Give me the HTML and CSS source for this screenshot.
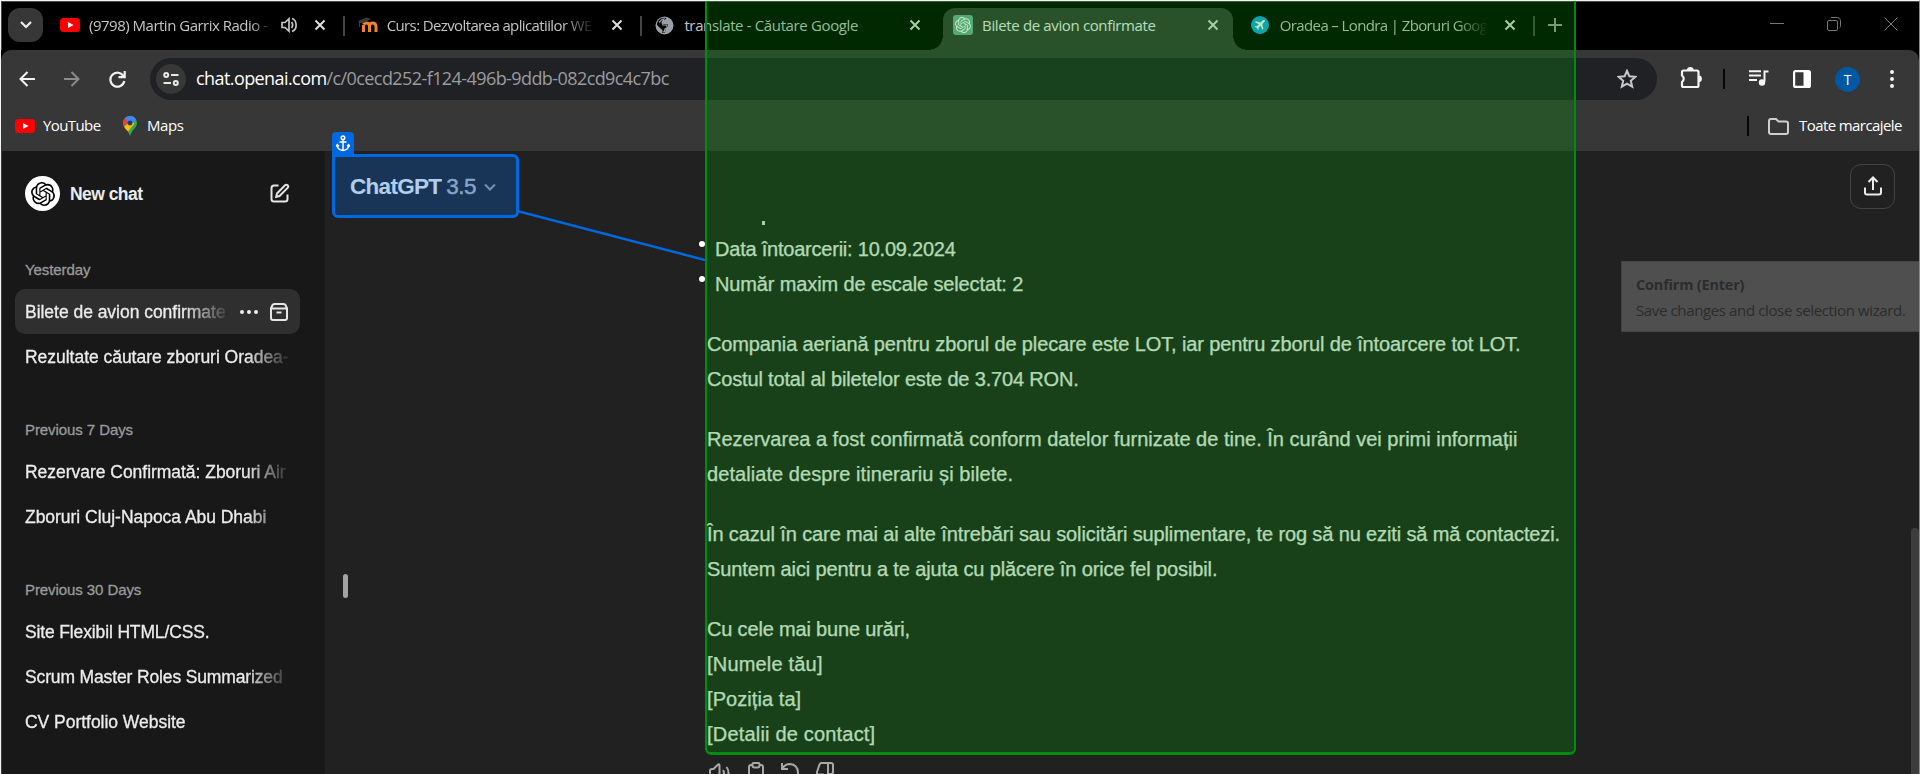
FILE: index.html
```html
<!DOCTYPE html>
<html lang="ro">
<head>
<meta charset="utf-8">
<title>Bilete de avion confirmate</title>
<link rel="stylesheet" href="styles.css">
</head>
<body>
<svg class="defs" width="0" height="0">
  <symbol id="knot" viewBox="0 0 24 24"><path fill="currentColor" d="M22.2819 9.8211a5.9847 5.9847 0 0 0-.5157-4.9108 6.0462 6.0462 0 0 0-6.5098-2.9A6.0651 6.0651 0 0 0 4.9807 4.1818a5.9847 5.9847 0 0 0-3.9977 2.9 6.0462 6.0462 0 0 0 .7427 7.0966 5.98 5.98 0 0 0 .511 4.9107 6.051 6.051 0 0 0 6.5146 2.9001A5.9847 5.9847 0 0 0 13.2599 24a6.0557 6.0557 0 0 0 5.7718-4.2058 5.9894 5.9894 0 0 0 3.9977-2.9001 6.0557 6.0557 0 0 0-.7475-7.0729zm-9.022 12.6081a4.4755 4.4755 0 0 1-2.8764-1.0408l.1419-.0804 4.7783-2.7582a.7948.7948 0 0 0 .3927-.6813v-6.7369l2.02 1.1686a.071.071 0 0 1 .038.052v5.5826a4.504 4.504 0 0 1-4.4945 4.4944zm-9.6607-4.1254a4.4708 4.4708 0 0 1-.5346-3.0137l.142.0852 4.783 2.7582a.7712.7712 0 0 0 .7806 0l5.8428-3.3685v2.3324a.0804.0804 0 0 1-.0332.0615L9.74 19.9502a4.4992 4.4992 0 0 1-6.1408-1.6464zM2.3408 7.8956a4.485 4.485 0 0 1 2.3655-1.9728V11.6a.7664.7664 0 0 0 .3879.6765l5.8144 3.3543-2.0201 1.1685a.0757.0757 0 0 1-.071 0l-4.8303-2.7865A4.504 4.504 0 0 1 2.3408 7.872zm16.5963 3.8558L13.1038 8.364 15.1192 7.2a.0757.0757 0 0 1 .071 0l4.8303 2.7913a4.4944 4.4944 0 0 1-.6765 8.1042v-5.6772a.79.79 0 0 0-.407-.667zm2.0107-3.0231l-.142-.0852-4.7735-2.7818a.7759.7759 0 0 0-.7854 0L9.409 9.2297V6.8974a.0662.0662 0 0 1 .0284-.0615l4.8303-2.7866a4.4992 4.4992 0 0 1 6.6802 4.66zM8.3065 12.863l-2.02-1.1638a.0804.0804 0 0 1-.038-.0567V6.0742a4.4992 4.4992 0 0 1 7.3757-3.4537l-.142.0805L8.704 5.459a.7948.7948 0 0 0-.3927.6813zm1.0976-2.3654l2.602-1.4998 2.6069 1.4998v2.9994l-2.5974 1.4997-2.6067-1.4997Z"/></symbol>
  <symbol id="close" viewBox="0 0 16 16"><path d="M3.5 3.5l9 9M12.5 3.5l-9 9" fill="none" stroke="currentColor" stroke-width="2"/></symbol>
  <symbol id="youtube" viewBox="0 0 20 14"><rect width="20" height="14" rx="3.5" fill="#f00"/><path d="M8 4l5.5 3L8 10z" fill="#fff"/></symbol>
</svg>

<div class="window">
  <header class="tabs">
    <button class="tab-search"><svg width="12" height="8" viewBox="0 0 12 8"><path d="M1 1l5 5 5-5" fill="none" stroke="#eee" stroke-width="2.2"/></svg></button>
    <div class="tab with-sound">
      <svg class="tab-icon" height="14"><use href="#youtube"/></svg>
      <span class="tab-title">(9798) Martin Garrix Radio -</span>
      <svg class="speaker" width="17" height="16" viewBox="0 0 17 16"><path d="M1 5.5h3l4-3.7v12.400L4 10.500H1z" fill="none" stroke="currentColor" stroke-width="1.700"/><path d="M10.500 5q2.300 3 0 6M11 1.500c5.500 2 5.500 11 0 13" fill="none" stroke="currentColor" stroke-width="1.700"/></svg>
      <svg class="tab-close"><use href="#close"/></svg>
    </div>
    <div class="tab long">
      <svg class="tab-icon" height="18" viewBox="0 0 20 18"><path d="M5.500 16V9M11.500 16V10q0-3-3-3-2 0-3 1.500M11.500 10q0-3 3-3t3.500 3v6" fill="none" stroke="#ef8430" stroke-width="3"/><path d="M0 5l8.500-3.500L13 3 5.500 7 2 7v4H1V7z" fill="#3e3a3a"/></svg>
      <span class="tab-title">Curs: Dezvoltarea aplicatiilor WE</span>
      <svg class="tab-close"><use href="#close"/></svg>
    </div>
    <div class="tab no-line">
      <svg class="tab-icon" height="19" viewBox="0 0 20 19"><circle cx="9.500" cy="9.500" r="9" fill="#9ba0a8"/><path d="M11.500 2q-1.500 2-3.500 2.500l-1 2 1.500 1.500h4l.5 3-2.500 2-.5 3.500-3 .5.500-3-2.500-2L2 9q-.2-2 1-4 3-4 8.500-3z" fill="#060606"/><path d="M4 6.500l3-3 2-.5-2 3.500 1 2.500h3.500l1 2.500-2.500 1.500-.5 2.500-2 .5" fill="none" stroke="#9ba0a8" stroke-width="1.200"/></svg>
      <span class="tab-title">translate - Căutare Google</span>
      <svg class="tab-close"><use href="#close"/></svg>
    </div>
    <div class="tab active no-line">
      <span class="tab-icon gpt-icon"><svg width="16" height="16"><use href="#knot"/></svg></span>
      <span class="tab-title">Bilete de avion confirmate</span>
      <svg class="tab-close"><use href="#close"/></svg>
    </div>
    <div class="tab long">
      <svg class="tab-icon" height="20" viewBox="0 0 20 20"><circle cx="9" cy="10" r="9" fill="#12a5e2"/><path d="M13.700 5.300c-.7-.7-1.600-.3-2.200.3L9.700 7.400 4.800 6.300l-.9.900 4 2-2 2-1.500-.2-.6.600 2 1.300 1.300 2 .6-.6-.2-1.500 2-2 2 4 .9-.9-1.100-4.900 1.800-1.800c.6-.6 1.200-1.400.6-1.900z" fill="#fff"/></svg>
      <span class="tab-title">Oradea – Londra | Zboruri Goog</span>
      <svg class="tab-close"><use href="#close"/></svg>
    </div>
    <svg class="new-tab" width="14" height="14"><path d="M7 0v14M0 7h14" stroke="#999" stroke-width="2"/></svg>
    <div class="controls">
      <svg width="14" height="14"><path d="M0 6.500h14" stroke="currentColor"/></svg>
      <svg width="14" height="14" fill="none" stroke="currentColor"><rect x=".5" y="3.500" width="10" height="10" rx="1.500"/><path d="M3.500 1q.5-.5 1.500-.5h5q3.500 0 3.500 3v5q0 1.500-.5 2"/></svg>
      <svg width="14" height="14"><path d="M.5.5l13 13M13.500.5l-13 13" stroke="currentColor"/></svg>
    </div>
  </header>

  <div class="toolbar">
    <div class="nav">
      <svg width="16" height="16" fill="none" stroke="#f2f2f2" stroke-width="2"><path d="M16 8H1.500M8.500 1L1.500 8l7 7"/></svg>
      <svg width="16" height="16" fill="none" stroke="#8a8a8a" stroke-width="2"><path d="M0 8h14.500M7.500 1l7 7-7 7"/></svg>
      <svg width="17" height="17" fill="none" stroke="#f2f2f2" stroke-width="2.200"><path d="M14.500 5.200A7 7 0 1 0 15.300 10"/><path d="M15.700 0v6.200H9.500" /></svg>
    </div>
    <div class="address">
      <span class="site-info"><svg width="16" height="14" fill="none" stroke="#e8e8e8" stroke-width="2"><circle cx="3.200" cy="3" r="2"/><path d="M8 3h7.500M.5 11H8"/><circle cx="12.800" cy="11" r="2"/></svg></span>
      <span class="url"><b>chat.openai.com</b>/c/0cecd252-f124-496b-9ddb-082cd9c4c7bc</span>
      <svg class="star" width="20" height="20" viewBox="0 0 20 20"><path d="M10 1.800l2.400 5.500 6 .5-4.600 4 1.400 5.900-5.200-3.100-5.200 3.100 1.400-5.900-4.600-4 6-.5z" fill="none" stroke="#c8c8cc" stroke-width="2"/></svg>
    </div>
    <div class="actions">
      <svg class="puzzle" width="22" height="22" viewBox="0 0 22 22"><path d="M3.500 3.500H17q1.500 0 1.500 1.500v13.500q0 1.500-1.500 1.500H3.500Q2 20 2 18.500V15q3.500-3.300 0-6.500V5q0-1.500 1.500-1.500z" fill="none" stroke="#f4f4f4" stroke-width="2.200"/><path d="M7 3a3.300 3 0 0 1 6.600 0zM19 8.500a2.900 3.200 0 0 1 0 6.400z" fill="#f4f4f4"/></svg>
      <i class="bar"></i>
      <svg class="music" width="20" height="16" viewBox="0 0 20 16"><path d="M0 1.200h12M0 5.600h12M0 10h8M15.500 11.500V1.500h4" fill="none" stroke="#f4f4f4" stroke-width="2"/><circle cx="13" cy="12.500" r="3.200" fill="#f4f4f4"/></svg>
      <svg class="panel" width="18" height="18"><rect x="1.100" y="1.100" width="15.800" height="15.800" rx="1.500" fill="none" stroke="#fff" stroke-width="2.200"/><path d="M10.500 1h7v16h-7z" fill="#fff"/></svg>
      <span class="avatar">T</span>
      <svg class="dots" width="4" height="18" fill="#f4f4f4"><circle cx="2" cy="2" r="2"/><circle cx="2" cy="9" r="2"/><circle cx="2" cy="16" r="2"/></svg>
    </div>
  </div>

  <div class="bookmarks">
    <svg class="bm-youtube" width="20" height="14"><use href="#youtube"/></svg><span class="bm-label bm-yt-label">YouTube</span>
    <svg class="pin" width="14" height="20" viewBox="0 0 14 20"><path d="M7 0a7 7 0 0 1 7 7c0 5-5.500 7-7 13C5.500 14 0 12 0 7a7 7 0 0 1 7-7z" fill="#34a853"/><path d="M1 10.500L9.300 5l2.200 2.500-6.300 8Q2 13 1 10.500z" fill="#fbbc04"/><path d="M1.500 2.600A7 7 0 0 1 13 3.500L7 9.500z" fill="#4285f4"/><path d="M1.500 2.600Q0 4.600 0 7q0 2 1 3.500L5.500 6z" fill="#ea4335"/><circle cx="7" cy="7" r="2.400" fill="#263c63"/></svg><span class="bm-label bm-maps">Maps</span>
    <i class="bar bm-bar"></i>
    <svg class="folder" width="21" height="17" viewBox="0 0 21 17"><path d="M1 3q0-2 2-2h5l2.500 2.500H18q2 0 2 2V14q0 2-2 2H3q-2 0-2-2z" fill="none" stroke="#cfcfcf" stroke-width="2"/></svg><span class="bm-label bm-all">Toate marcajele</span>
  </div>

  <div class="page">
    <aside class="sidebar">
      <div class="new-chat">
        <span class="logo"><svg width="24" height="24"><use href="#knot"/></svg></span>
        <span class="new-label">New chat</span>
        <svg width="20" height="20" viewBox="0 0 20 20" fill="none" stroke="#e6e6e6" stroke-width="2"><path d="M8.500 2.500H4q-2.500 0-2.500 2.500v11q0 2.500 2.500 2.500h11q2.500 0 2.500-2.500v-4.500"/><path d="M7 10.500l8-8.200q1.300-1.200 2.600 0 1.300 1.300 0 2.600L9.500 13l-3.300.8z"/></svg>
      </div>
      <section>
        <h3>Yesterday</h3>
        <div class="chat current"><span class="fade">Bilete de avion confirmate</span>
          <svg width="18" height="4" fill="#eee"><circle cx="2" cy="2" r="2"/><circle cx="9" cy="2" r="2"/><circle cx="16" cy="2" r="2"/></svg>
          <svg width="18" height="18" viewBox="0 0 18 18" fill="none" stroke="#e6e6e6" stroke-width="2"><path d="M1 5.500h16V15q0 2-2 2H3q-2 0-2-2zM1 5.500L2.500 2q.5-1 2-1h9q1.500 0 2 1L17 5.500M6.500 9.500h5"/></svg>
        </div>
        <div class="chat"><span class="fade">Rezultate căutare zboruri Oradea-</span></div>
      </section>
      <section>
        <h3>Previous 7 Days</h3>
        <div class="chat"><span class="fade">Rezervare Confirmată: Zboruri Air</span></div>
        <div class="chat"><span class="fade">Zboruri Cluj-Napoca Abu Dhabi</span></div>
      </section>
      <section>
        <h3>Previous 30 Days</h3>
        <div class="chat"><span class="fade tight">Site Flexibil HTML/CSS.</span></div>
        <div class="chat"><span class="fade tight">Scrum Master Roles Summarized</span></div>
        <div class="chat"><span class="fade">CV Portfolio Website</span></div>
      </section>
    </aside>
    <main class="main">
      <div class="main-head">
        <div class="model"><b>ChatGPT</b> <span>3.5</span><svg width="12" height="8"><path d="M1 1.500l5 5 5-5" fill="none" stroke="#9a9a9a" stroke-width="2"/></svg></div>
        <button class="share"><svg width="18" height="20" fill="none" stroke="#ececec" stroke-width="2"><path d="M9 14V2M4.500 6L9 1.500 13.500 6M1 11.500v5q0 2 2 2h12q2 0 2-2v-5"/></svg></button>
      </div>
      <article class="message">
        <ul>
          <li class="t3">Data întoarcerii: 10.09.2024</li>
          <li class="t1">Număr maxim de escale selectat: 2</li>
        </ul>
        <p><span class="t1">Compania aeriană pentru zborul de plecare este LOT, iar pentru zborul de întoarcere tot LOT.</span><br><span class="t2">Costul total al biletelor este de 3.704 RON.</span></p>
        <p><span>Rezervarea a fost confirmată conform datelor furnizate de tine. În curând vei primi informații</span><br><span class="w1">detaliate despre itinerariu și bilete.</span></p>
        <p><span class="t1">În cazul în care mai ai alte întrebări sau solicitări suplimentare, te rog să nu eziti să mă contactezi.</span><br><span class="t1">Suntem aici pentru a te ajuta cu plăcere în orice fel posibil.</span></p>
        <p><span class="t2">Cu cele mai bune urări,</span><br><span class="w2">[Numele tău]</span><br><span class="w1">[Poziția ta]</span><br><span class="w2">[Detalii de contact]</span></p>
        <div class="reply-actions">
          <svg width="22" height="20"><path d="M1 9q0-2 2-2h1.500L9 2.500q1.500-1 1.500 1V19M14 8q2 3 0 7M17.500 5q4 5 0 12M1 9v8"/></svg>
          <svg width="16" height="20"><path d="M4.500 3H3Q1 3 1 5v14M11.500 3H13q2 0 2 2v14M4.500 2q0-1 1-1h5q1 0 1 1v1.500q0 2-2 2h-3q-2 0-2-2z"/></svg>
          <svg width="18" height="20"><path d="M1 1v6h6M1.500 6.500Q4 2 9 2q7.500.5 8 8.500v5"/></svg>
          <svg width="18" height="20"><path d="M12 1H5.500Q4 1 3.500 2.500L1 10q-.5 2.500 2 2.500h4V19M12 1v11l-4 6M12 1h3q2 0 2 2v7q0 2-2 2h-3"/></svg>
        </div>
      </article>
      <i class="scrollbar"></i>
      <i class="handle"></i>
      <i class="clipped"></i>
    </main>
  </div>

  <div class="tooltip"><b>Confirm (Enter)</b><span>Save changes and close selection wizard.</span></div>
  <div class="target"></div>
  <svg class="connector" width="186" height="52"><path d="M0 1.500L186 50" stroke="#0068e0" stroke-width="2.500"/></svg>
  <div class="anchor-box"></div>
  <div class="anchor-tag"><svg width="14" height="17" viewBox="0 0 14 17" fill="none" stroke="#fff" stroke-width="1.500"><circle cx="7" cy="2.700" r="1.800"/><path d="M7 4.500V16M3.500 7h7M1.200 10q.3 5 5.800 5.500 5.500-.5 5.800-5.500M0 11.500L1.300 9.700l1.700 1.500M14 11.500l-1.300-1.800-1.700 1.500"/></svg></div>
</div>
</body>
</html>
```
FILE: styles.css
```css
* { box-sizing: border-box; }
body { margin: 0; background: #212121; }
.defs { position: absolute; }
button { padding: 0; border: 0; display: flex; align-items: center; justify-content: center; }
svg { flex: none; display: block; }

.window {
  position: relative; width: 1920px; height: 774px; overflow: hidden;
  display: flex; flex-direction: column;
  border: 1px solid #f4f4f4; border-right-color: #8a8a8a; border-bottom: 0;
  background: #000; color: #fff;
  font-family: "Open Sans", "Noto Sans", sans-serif;
}

/* Tab strip */
.tabs { height: 49px; display: flex; padding-left: 7px; flex: none; box-shadow: inset 1px 1px 0 #4a4a4a; }
.tab-search { width: 35px; height: 34px; margin: 7px 7px 0 0; border-radius: 12px; background: #373737; }
.tab { position: relative; width: 289.700px; height: 42px; margin: 7px 8px 0 0; padding: 0 12px 0 10px; display: flex; align-items: center; color: #c4c4c4; }
.tab::after { content: ""; position: absolute; right: -5px; top: 8px; width: 2px; height: 20px; background: #454545; }
.tab.no-line::after { display: none; }
.tab.active { background: #373737; border-radius: 12px 12px 0 0; color: #f0f0f0; }
.tab.active::before { content: ""; position: absolute; left: -14px; right: -14px; bottom: 0; height: 14px;
  background: radial-gradient(circle at 0 0, transparent 13.500px, #373737 14px) left / 14px 14px no-repeat,
              radial-gradient(circle at 100% 0, transparent 13.500px, #373737 14px) right / 14px 14px no-repeat; }
.tab > * { margin-bottom: 8px; }
.tab-icon { width: 20px; margin-right: 9px; flex: none; }
.gpt-icon { height: 20px; border-radius: 3px; background: #74aa9c; display: flex; align-items: center; justify-content: center; color: #fff; }
.tab-title { flex: 1; min-width: 0; overflow: hidden; white-space: nowrap; font-size: 15px; line-height: 24px; letter-spacing: -.36px; margin-right: 12px; }
.long .tab-title { letter-spacing: -.62px; mask-image: linear-gradient(90deg, #000 calc(100% - 34px), transparent calc(100% - 2px)); }
.with-sound .tab-title { letter-spacing: -.5px; margin-right: 18px; mask-image: linear-gradient(90deg, #000 calc(100% - 22px), transparent); }
.speaker { margin: 0 14px 8px -10px; }
.tab-close { width: 16px; height: 16px; color: #dedede; }
.new-tab { margin: 17px 0 0 10px; }
.controls { margin-left: auto; display: flex; gap: 43px; padding: 16px 21px 0 0; color: #777; }

/* Toolbar */
.toolbar { height: 59px; flex: none; display: flex; align-items: center; background: #373737; border-radius: 10px 10px 0 0; padding-bottom: 1px; }
.nav { width: 149px; padding-left: 18px; display: flex; gap: 29px; }
.address { width: 1507px; height: 42px; border-radius: 21px; background: #202124; display: flex; align-items: center; padding: 0 20px 0 6px; }
.site-info { width: 30px; height: 30px; border-radius: 50%; background: #373737; display: flex; align-items: center; justify-content: center; }
.url { margin: -2px 0 0 10px; flex: 1; font-size: 18px; letter-spacing: -.58px; color: #9a9ca0; }
.url b { font-weight: 400; color: #fff; }
.actions { flex: 1; display: flex; align-items: center; padding-left: 23px; }
.bar { width: 2px; height: 20px; background: #050505; }
.puzzle { margin: -3px 21px 0 0; }
.music { margin: -2px 0 0 24px; }
.panel { margin-left: 24px; }
.avatar { width: 25px; height: 25px; margin-left: 24px; border-radius: 50%; background: #0058a3; font-size: 14px; line-height: 25px; text-align: center; }
.dots { margin-left: 30px; }

/* Bookmarks bar */
.bookmarks { height: 42px; flex: none; display: flex; align-items: center; padding: 0 16px 8px 14px; background: #373737; font-size: 15px; letter-spacing: -.45px; white-space: nowrap; }
.bm-label { margin-top: -2px; }
.bm-yt-label { width: 58px; margin-left: 8px; letter-spacing: -.6px; }
.pin { margin-left: 22px; }
.bm-maps { margin-left: 10px; }
.bm-bar { margin-left: auto; }
.folder { margin: 0 10px 0 19px; }
.bm-all { width: 104px; letter-spacing: -.58px; }

/* Page */
.page { flex: 1; display: flex; min-height: 0; font-family: "Liberation Sans", Arial, sans-serif; }
.sidebar { width: 324px; background: #181818; padding: 0 25px 0 13px; border-left: 1px solid #3c3c3c; color: #ececec; }
.new-chat { height: 51px; margin-top: 17px; display: flex; align-items: center; padding: 0 10px 0 10px; }
.new-chat > svg { margin-top: -2px; }
.logo { width: 35px; height: 35px; border-radius: 50%; background: #fff; color: #000; display: flex; align-items: center; justify-content: center; }
.new-label { flex: 1; margin-left: 10px; margin-top: 2px; font-size: 17.500px; font-weight: 700; letter-spacing: -.55px; }
.sidebar section { height: 160px; }
.sidebar section:first-of-type { margin-top: 38px; }
.sidebar h3 { margin: 0 0 0 10px; height: 32px; line-height: 25px; font-size: 15px; letter-spacing: -.08px; color: #9b9b9b; font-weight: 500; -webkit-text-stroke: .3px; }
.chat { height: 45px; padding: 0 12px 0 10px; display: flex; align-items: center; border-radius: 10px; }
.chat.current { background: #2f2f2f; }
.chat.current svg { margin-left: 12px; }
.chat.current svg:first-of-type { margin-left: 14px; }
.fade { flex: 1; min-width: 0; overflow: hidden; white-space: nowrap; font-size: 17.500px; letter-spacing: -.03px; line-height: 26px; -webkit-text-stroke: .3px;
  mask-image: linear-gradient(90deg, #000 calc(100% - 42px), rgba(0, 0, 0, .1)); }
.tight { letter-spacing: -.14px; }

.main { position: relative; flex: 1; background: #212121; }
.main-head { height: 75px; display: flex; justify-content: space-between; align-items: center; padding: 0 24px 4px 25px; }
.model { display: flex; align-items: center; font-size: 22.500px; color: #b4b4b4; letter-spacing: -.6px; }
.model b { color: #ececec; margin-right: 5px; letter-spacing: -.7px; }
.model span { -webkit-text-stroke: .5px; }
.model svg { margin: 1px 0 0 8px; }
.share { width: 45px; height: 45px; border: 1px solid #444; border-radius: 11px; background: none; }
.share svg { margin-top: -2px; }
.message { margin-left: 382px; padding-top: 6px; font-size: 20px; line-height: 35px; color: #ececec; white-space: nowrap; -webkit-text-stroke: .25px; }
.message ul { margin: 0; padding: 0 0 0 8px; list-style: none; }
.message li { position: relative; }
.message li::before { content: ""; position: absolute; left: -16px; top: 9px; width: 6px; height: 6px; border-radius: 50%; background: #fff; }
.message p { margin: 25px 0 0; }
.t1 { letter-spacing: -.125px; }
.t2 { letter-spacing: -.17px; }
.t3 { letter-spacing: -.22px; }
.w1 { letter-spacing: .07px; }
.w2 { letter-spacing: .19px; }
.reply-actions { display: flex; gap: 17px; margin: 10px 0 0 2px; height: 12px; overflow: hidden; fill: none; stroke: #a8a8a8; stroke-width: 2; }
.scrollbar { position: absolute; right: 0; top: 377px; bottom: 0; width: 8px; border-radius: 4px 4px 0 0; background: #3d3d3d; }
.handle { position: absolute; left: 18px; top: 423px; width: 5px; height: 24px; border-radius: 3px; background: #a3a3a3; }
.clipped { position: absolute; left: 437px; top: 70px; width: 3px; height: 4px; background: #dedede; }

/* Selection overlay */
.tooltip { position: absolute; left: 1620px; top: 260px; width: 298px; height: 71px; padding: 12px 0 0 14px; display: flex; flex-direction: column; border: 1px solid #424242; border-right: 0; background: #4f4f4f; color: #2c2c2c; font-size: 15px; line-height: 22px; white-space: nowrap; }
.tooltip b { margin-bottom: 3px; font-size: 14.500px; letter-spacing: -.2px; }
.tooltip span { letter-spacing: -.37px; }
.target { position: absolute; left: 704px; top: -10px; width: 871px; height: 764px; border: 2px solid #008c0c; border-bottom-width: 3px; border-radius: 6px; background: rgba(0, 165, 8, .25); }
.anchor-box { position: absolute; left: 331px; top: 153px; width: 187px; height: 64px; border: 3px solid #0068e0; border-radius: 0 6px 6px 6px; background: rgba(0, 110, 250, .25); }
.anchor-tag { position: absolute; left: 331px; top: 131px; width: 22px; height: 23px; border-radius: 4px 4px 0 0; background: #0068e0; display: flex; align-items: center; justify-content: center; }
.connector { position: absolute; left: 518px; top: 209px; }
```
